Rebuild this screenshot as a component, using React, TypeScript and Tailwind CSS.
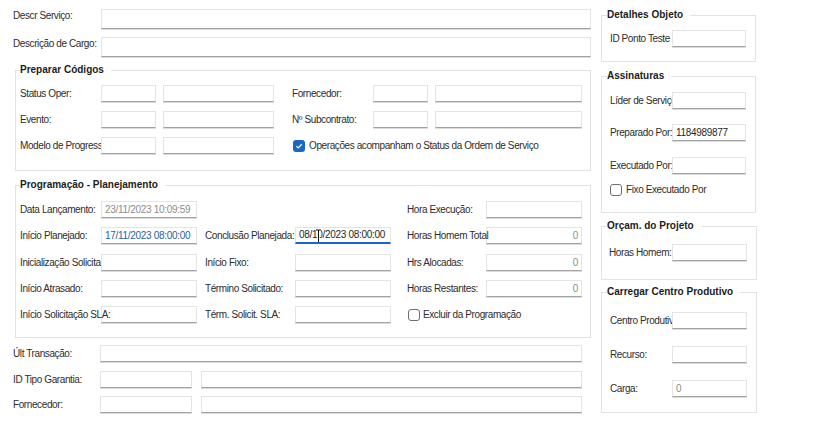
import React from 'react';

type Tone = 'dark' | 'gray' | 'blue';

interface FieldProps {
  w?: string;
  tall?: boolean;
  value?: string;
  tone?: Tone;
  right?: boolean;
  focused?: boolean;
  children?: React.ReactNode;
}

const toneCls: Record<Tone, string> = {
  dark: 'text-[#1f1f1f]',
  gray: 'text-[#8c8c8c]',
  blue: 'text-[#23649f]',
};

const Field = ({ w = 'flex-1', tall, value, tone = 'dark', right, focused, children }: FieldProps) => (
  <div
    className={`relative shrink-0 flex items-center bg-white px-[3px] text-[10px] tracking-[-0.3px] leading-none whitespace-nowrap overflow-hidden border border-[#e4e4e4] ${
      tall ? 'h-[20px]' : 'h-[17px]'
    } ${focused ? 'border-b-2 border-b-[#1a66c4]' : 'border-b-[#a2a2a2] shadow-[0_1px_0_#dcdcdc]'} ${
      right ? 'justify-end' : ''
    } ${toneCls[tone]} ${w}`}
  >
    {value}
    {children}
  </div>
);

const Label = ({ w, over, top, children }: { w: string; over?: boolean; top?: boolean; children: React.ReactNode }) => (
  <div
    className={`shrink-0 whitespace-nowrap text-[10px] tracking-[-0.4px] text-[#2d2d2d] ${
      top ? 'leading-[14px]' : 'leading-[17px]'
    } ${over ? 'relative z-10 overflow-visible' : 'overflow-hidden'} ${w}`}
  >
    {children}
  </div>
);

const Check = ({ checked }: { checked?: boolean }) =>
  checked ? (
    <span className="shrink-0 w-[12px] h-[12px] rounded-[3px] bg-[#1a66c4] flex items-center justify-center">
      <svg width="8" height="8" viewBox="0 0 8 8">
        <path d="M1.3 4.1 L3.2 5.9 L6.7 2.2" stroke="#fff" strokeWidth="1.3" fill="none" />
      </svg>
    </span>
  ) : (
    <span className="shrink-0 w-[12px] h-[12px] rounded-[3px] border border-[#6e6e6e] bg-white" />
  );

const Group = ({ title, className, legendCls, children }: { title: string; className: string; legendCls?: string; children: React.ReactNode }) => (
  <fieldset className={`border border-[#e3e3e3] ${className}`}>
    <legend className={`pr-[7px] text-[10px] leading-[12px] font-bold text-[#1c1c1c] ${legendCls ?? ''}`}>{title}</legend>
    {children}
  </fieldset>
);

export default function App() {
  return (
    <div className="w-[816px] h-[427px] bg-white flex overflow-hidden font-['Liberation_Sans',Arial,sans-serif]">
      {/* main column */}
      <div className="w-[591px] shrink-0 pl-[13px] pt-[9px] flex flex-col">
        <div className="flex items-start">
          <Label w="w-[88px]" top>
            Descr Serviço:
          </Label>
          <Field tall />
        </div>
        <div className="flex items-start mt-[8px]">
          <Label w="w-[88px]" top>
            Descrição de Cargo:
          </Label>
          <Field tall />
        </div>

        <Group title="Preparar Códigos" className="mt-[7px] ml-[2px] pl-[4px] pr-[8px] pt-[9px] pb-[16px]">
          <div className="flex flex-col gap-[9px]">
            <div className="flex items-center">
              <Label w="w-[81px]">Status Oper:</Label>
              <Field w="w-[55px]" />
              <div className="w-[7px] shrink-0" />
              <Field w="w-[111px]" />
              <div className="w-[18px] shrink-0" />
              <Label w="w-[81px]">Fornecedor:</Label>
              <Field w="w-[55px]" />
              <div className="w-[7px] shrink-0" />
              <Field w="w-[147px]" />
            </div>
            <div className="flex items-center">
              <Label w="w-[81px]">Evento:</Label>
              <Field w="w-[55px]" />
              <div className="w-[7px] shrink-0" />
              <Field w="w-[111px]" />
              <div className="w-[18px] shrink-0" />
              <Label w="w-[81px]">Nº Subcontrato:</Label>
              <Field w="w-[55px]" />
              <div className="w-[7px] shrink-0" />
              <Field w="w-[147px]" />
            </div>
            <div className="flex items-center">
              <Label w="w-[81px]">Modelo de Progress</Label>
              <Field w="w-[55px]" />
              <div className="w-[7px] shrink-0" />
              <Field w="w-[111px]" />
              <div className="w-[19px] shrink-0" />
              <Check checked />
              <span className="ml-[4px] text-[10px] tracking-[-0.4px] leading-[17px] text-[#2d2d2d] whitespace-nowrap">
                Operações acompanham o Status da Ordem de Serviço
              </span>
            </div>
          </div>
        </Group>

        <Group title="Programação - Planejamento" className="mt-[8px] ml-[2px] pl-[4px] pr-[8px] pt-[10px] pb-[14px]">
          <div className="flex flex-col">
            <div className="flex items-center">
              <Label w="w-[81px]">Data Lançamento:</Label>
              <Field w="w-[96px]" value="23/11/2023 10:09:59" tone="gray" />
              <div className="w-[210px] shrink-0" />
              <Label w="w-[79px]">Hora Execução:</Label>
              <Field w="w-[96px]" />
            </div>
            <div className="flex items-center mt-[9px]">
              <Label w="w-[81px]">Início Planejado:</Label>
              <Field w="w-[96px]" value="17/11/2023 08:00:00" tone="blue" />
              <div className="w-[8px] shrink-0" />
              <Label w="w-[90px]">Conclusão Planejada:</Label>
              <Field w="w-[96px]" value="08/10/2023 08:00:00" focused>
                <svg className="absolute left-[19px] top-[1px]" width="7" height="16" viewBox="0 0 7 16">
                  <path d="M1 1 H3.5 M3.5 1 H6 M3.5 1 V15 M1 15 H6" stroke="#fff" strokeWidth="2.6" fill="none" />
                  <path d="M1 1 H3.5 M3.5 1 H6 M3.5 1 V15 M1 15 H6" stroke="#111" strokeWidth="1" fill="none" />
                </svg>
              </Field>
              <div className="w-[16px] shrink-0" />
              <Label w="w-[79px]" over>
                Horas Homem Total
              </Label>
              <Field w="w-[96px]" value="0" tone="gray" right />
            </div>
            <div className="flex items-center mt-[10px]">
              <Label w="w-[81px]">Inicialização Solicitada:</Label>
              <Field w="w-[96px]" />
              <div className="w-[8px] shrink-0" />
              <Label w="w-[90px]">Início Fixo:</Label>
              <Field w="w-[96px]" />
              <div className="w-[16px] shrink-0" />
              <Label w="w-[79px]">Hrs Alocadas:</Label>
              <Field w="w-[96px]" value="0" tone="gray" right />
            </div>
            <div className="flex items-center mt-[9px]">
              <Label w="w-[81px]">Início Atrasado:</Label>
              <Field w="w-[96px]" />
              <div className="w-[8px] shrink-0" />
              <Label w="w-[90px]">Término Solicitado:</Label>
              <Field w="w-[96px]" />
              <div className="w-[16px] shrink-0" />
              <Label w="w-[79px]">Horas Restantes:</Label>
              <Field w="w-[96px]" value="0" tone="gray" right />
            </div>
            <div className="flex items-center mt-[9px]">
              <Label w="w-[81px]" over>
                Início Solicitação SLA:
              </Label>
              <Field w="w-[96px]" />
              <div className="w-[8px] shrink-0" />
              <Label w="w-[90px]">Térm. Solicit. SLA:</Label>
              <Field w="w-[96px]" />
              <div className="w-[17px] shrink-0" />
              <Check />
              <span className="ml-[3px] text-[10px] tracking-[-0.4px] leading-[17px] text-[#2d2d2d] whitespace-nowrap">
                Excluir da Programação
              </span>
            </div>
          </div>
        </Group>

        <div className="flex flex-col pr-[9px] mt-[7px]">
          <div className="flex items-center">
            <Label w="w-[87px]">Últ Transação:</Label>
            <Field />
          </div>
          <div className="flex items-center mt-[9px]">
            <Label w="w-[87px]">ID Tipo Garantia:</Label>
            <Field w="w-[92px]" />
            <div className="w-[9px] shrink-0" />
            <Field />
          </div>
          <div className="flex items-center mt-[8px]">
            <Label w="w-[87px]">Fornecedor:</Label>
            <Field w="w-[92px]" />
            <div className="w-[9px] shrink-0" />
            <Field />
          </div>
        </div>
      </div>

      {/* side column */}
      <div className="w-[155px] shrink-0 ml-[10px] pt-[9px] flex flex-col">
        <Group title="Detalhes Objeto" className="pl-[8px] pr-[9px] pt-[9px] pb-[14px]" legendCls="-ml-[3px]">
          <div className="flex items-center">
            <Label w="w-[62px]">ID Ponto Teste</Label>
            <Field w="w-[74px]" />
          </div>
        </Group>

        <Group title="Assinaturas" className="mt-[8px] pl-[8px] pr-[9px] pt-[10px] pb-[16px]" legendCls="-ml-[3px]">
          <div className="flex flex-col">
            <div className="flex items-center">
              <Label w="w-[62px]">Líder de Serviço:</Label>
              <Field w="w-[74px]" />
            </div>
            <div className="flex items-center mt-[15px]">
              <Label w="w-[62px]">Preparado Por:</Label>
              <Field w="w-[74px]" value="1184989877" />
            </div>
            <div className="flex items-center mt-[16px]">
              <Label w="w-[62px]">Executado Por:</Label>
              <Field w="w-[74px]" />
            </div>
            <div className="flex items-center mt-[9px] h-[13px]">
              <Check />
              <span className="ml-[4px] text-[10px] tracking-[-0.4px] leading-[13px] text-[#2d2d2d] whitespace-nowrap">
                Fixo Executado Por
              </span>
            </div>
          </div>
        </Group>

        <Group title="Orçam. do Projeto" className="mt-[7px] pl-[7px] pr-[9px] pt-[12px] pb-[18px]" legendCls="-ml-[2px]">
          <div className="flex items-center">
            <Label w="w-[63px]">Horas Homem:</Label>
            <Field w="w-[75px]" />
          </div>
        </Group>

        <Group title="Carregar Centro Produtivo" className="mt-[6px] pl-[8px] pr-[9px] pt-[14px] pb-[15px]" legendCls="-ml-[3px]">
          <div className="flex flex-col gap-[17px]">
            <div className="flex items-center">
              <Label w="w-[62px]">Centro Produtivo:</Label>
              <Field w="w-[75px]" />
            </div>
            <div className="flex items-center">
              <Label w="w-[62px]">Recurso:</Label>
              <Field w="w-[75px]" />
            </div>
            <div className="flex items-center">
              <Label w="w-[62px]">Carga:</Label>
              <Field w="w-[75px]" value="0" tone="gray" />
            </div>
          </div>
        </Group>
      </div>
    </div>
  );
}
